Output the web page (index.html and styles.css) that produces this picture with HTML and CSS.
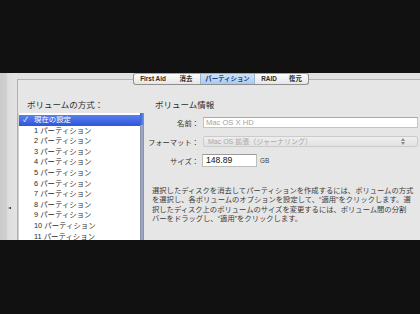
FILE: index.html
```html
<!DOCTYPE html>
<html lang="ja">
<head>
<meta charset="utf-8">
<title>ディスクユーティリティ</title>
<link rel="stylesheet" href="styles.css">
</head>
<body>
<div class="screen">
  <div class="letterbox"></div>
  <div class="window">
    <div class="edge"><span class="grip"></span></div>
    <div class="main">
      <div class="tabs">
        <span class="tab t1">First Aid</span>
        <span class="tab t2">消去</span>
        <span class="tab t3 active">パーティション</span>
        <span class="tab t4">RAID</span>
        <span class="tab t5">復元</span>
      </div>
      <div class="panel">
        <div class="left">
          <div class="heading">ボリュームの方式：</div>
          <div class="menu">
            <div class="menu-list">
              <div class="item sel"><span class="check">✓</span>現在の設定</div>
              <div class="item">1 パーティション</div>
              <div class="item">2 パーティション</div>
              <div class="item">3 パーティション</div>
              <div class="item">4 パーティション</div>
              <div class="item">5 パーティション</div>
              <div class="item">6 パーティション</div>
              <div class="item">7 パーティション</div>
              <div class="item">8 パーティション</div>
              <div class="item">9 パーティション</div>
              <div class="item">10 パーティション</div>
              <div class="item">11 パーティション</div>
            </div>
            <div class="menu-side"><span class="cap"></span></div>
          </div>
        </div>
        <div class="right">
          <div class="heading info">ボリューム情報</div>
          <div class="row r-name">
            <span class="label">名前：</span>
            <span class="field text">Mac OS X HD</span>
          </div>
          <div class="row r-format">
            <span class="label">フォーマット：</span>
            <span class="field popup"><span>Mac OS 拡張（ジャーナリング）</span>
              <svg class="arrows" width="4" height="7" viewBox="0 0 4 7"><path d="M0 3 L2 0 L4 3 Z M0 4 L2 7 L4 4 Z" fill="#8a8a8a"/></svg>
            </span>
          </div>
          <div class="row r-size">
            <span class="label">サイズ：</span>
            <span class="field size">148.89</span>
            <span class="unit">GB</span>
          </div>
          <p class="desc">選択したディスクを消去してパーティションを作成するには、ボリュームの方式<br>を選択し、各ボリュームのオプションを設定して、“適用”をクリックします。選<br>択したディスク上のボリュームのサイズを変更するには、ボリューム間の分割<br>バーをドラッグし、“適用”をクリックします。</p>
        </div>
      </div>
    </div>
  </div>
  <div class="letterbox"></div>
</div>
</body>
</html>
```
FILE: styles.css
```css
html, body {
  margin: 0;
  padding: 0;
  background: #111111;
}
body {
  width: 420px;
  height: 314px;
  overflow: hidden;
  font-family: "Liberation Sans", "Noto Sans CJK JP", sans-serif;
}
.screen {
  display: flex;
  flex-direction: column;
  height: 314px;
}
.letterbox {
  height: 73px;
  background: #111111;
  flex: none;
}
.letterbox:last-child {
  flex: 1;
}
.window {
  height: 167px;
  flex: none;
  display: flex;
  overflow: hidden;
  background: #e0e0e0;
}
.edge {
  width: 17px;
  flex: none;
  background: linear-gradient(to right, #cbcbcb 0, #cfcfcf 6px, #dedede 8px, #e3e3e3 17px);
  display: flex;
  align-items: flex-start;
  padding-top: 134px;
  padding-left: 8px;
  box-sizing: border-box;
}
.grip {
  width: 0;
  height: 0;
  border-top: 1.5px solid transparent;
  border-bottom: 1.5px solid transparent;
  border-right: 3px solid #222;
}
.main {
  flex: 1;
  display: flex;
  flex-direction: column;
  min-width: 0;
  min-height: 0;
}
.tabs {
  position: relative;
  z-index: 2;
  flex: none;
  margin-left: 116px;
  width: 176px;
  height: 12px;
  box-sizing: border-box;
  display: flex;
  border: 1px solid #8f8f8f;
  border-top-color: #a5a5a5;
  border-radius: 3px;
  background: linear-gradient(#fdfdfd, #e6e6e6);
  overflow: hidden;
}
.tab {
  font-size: 6.4px;
  font-weight: bold;
  color: #2a2a2a;
  line-height: 10px;
  text-align: center;
  flex: none;
}
.t1 { width: 38px; }
.t2 { width: 28px; }
.t3 { width: 55px; }
.t4 { width: 28px; }
.t5 { width: 25px; }
.tab.active {
  background: linear-gradient(#cfe3f6, #a9cbee);
  color: #1f3f8f;
  border-left: 1px solid #9fb3cc;
  border-right: 1px solid #9fb3cc;
  box-sizing: border-box;
}
.panel {
  margin-top: -6px;
  flex: none;
  height: 200px;
  border-top: 1px solid #b4b4b4;
  border-left: 1px solid #b0b0b0;
  background: #e6e6e6;
  display: grid;
  grid-template-columns: 126px 1fr;
  align-items: start;
  padding-top: 19px;
  box-sizing: border-box;
}
.heading {
  font-size: 8.5px;
  line-height: 12px;
  color: #2e2e2e;
  white-space: nowrap;
}
.left .heading {
  padding-left: 9px;
}
.menu {
  margin-top: 2px;
  display: flex;
  height: 140px;
}
.menu-list {
  flex: 1;
  background: #ffffff;
  padding-top: 2px;
  border-left: 1px solid #cfcfcf;
}
.item {
  height: 10.6px;
  line-height: 10.6px;
  font-size: 7.4px;
  color: #2a2a2a;
  padding-left: 15px;
  white-space: nowrap;
  position: relative;
}
.item.sel {
  background: linear-gradient(#5b80ec, #2c55dc);
  color: #ffffff;
}
.check {
  position: absolute;
  left: 4px;
  top: 0;
  font-size: 7px;
}
.menu-side {
  width: 4px;
  flex: none;
  background: linear-gradient(to right, #7c89a6, #a7b2c8, #7c89a6);
  display: flex;
  flex-direction: column;
}
.cap {
  height: 12px;
  background: linear-gradient(to right, #3560d8, #6f95ec);
  border-radius: 0 2px 2px 0;
}
.right {
  padding-right: 2px;
  min-width: 0;
}
.heading.info {
  padding-left: 11px;
}
.row {
  display: flex;
  align-items: center;
}
.label {
  width: 55px;
  flex: none;
  display: flex;
  justify-content: flex-end;
  font-size: 7.3px;
  color: #333333;
  white-space: nowrap;
  margin-right: 4px;
}
.r-name {
  margin-top: 6px;
  height: 11px;
}
.r-format {
  margin-top: 8px;
  height: 11px;
}
.r-size {
  margin-top: 7px;
  height: 13px;
}
.field {
  box-sizing: border-box;
  white-space: nowrap;
}
.text {
  flex: 1;
  height: 11px;
  background: #ffffff;
  border: 1px solid #c4c4c4;
  border-top-color: #a8a8a8;
  font-size: 7.6px;
  line-height: 9px;
  color: #a3a3a3;
  padding-left: 2px;
}
.popup {
  flex: 1;
  height: 11px;
  background: linear-gradient(#efefef, #e2e2e2);
  border: 1px solid #cbcbcb;
  border-radius: 2px;
  font-size: 7px;
  line-height: 9px;
  color: #a8a8a8;
  padding-left: 4px;
  padding-right: 12px;
  display: flex;
  justify-content: space-between;
  align-items: center;
}
.size {
  width: 55px;
  height: 13px;
  margin-left: -1px;
  background: #ffffff;
  border: 1px solid #bdbdbd;
  border-top-color: #9a9a9a;
  font-size: 8.6px;
  line-height: 11px;
  color: #111111;
  padding-left: 3px;
}
.unit {
  margin-left: 3px;
  font-size: 6.4px;
  color: #444444;
}
.desc {
  margin: 19px 0 0 0;
  padding-left: 8px;
  font-size: 7.3px;
  line-height: 9.35px;
  color: #3c3c3c;
  white-space: nowrap;
}
```
